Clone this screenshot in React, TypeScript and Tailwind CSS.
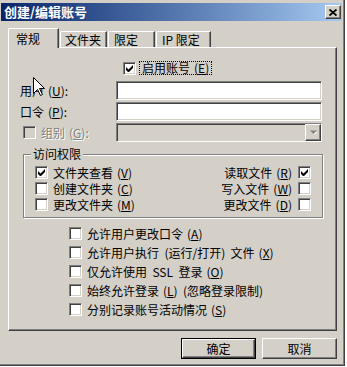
import React from "react";

const font = "font-['Noto_Sans_CJK_SC','Noto_Sans',sans-serif]";
const sunken =
  "border border-t-[#808080] border-l-[#808080] border-b-white border-r-white shadow-[inset_1px_1px_0_#404040,inset_-1px_-1px_0_#d4d0c8]";
const raised =
  "border border-t-white border-l-white border-b-[#404040] border-r-[#404040] shadow-[inset_-1px_-1px_0_#808080]";

function Acc({ k }: { k: string }) {
  return (
    <span className="ml-[4px]">
      (<span className="underline underline-offset-1">{k}</span>)
    </span>
  );
}

function Check({ on, disabled }: { on?: boolean; disabled?: boolean }) {
  return (
    <span
      className={`w-[13px] h-[13px] shrink-0 flex items-center justify-center ${sunken} ${
        disabled ? "bg-[#d4d0c8]" : "bg-white"
      }`}
    >
      {on && (
        <svg width="7" height="7" viewBox="0 0 7 7">
          <path d="M0 2L2.5 4.5L7 0V3L2.5 7.5L0 5Z" fill="#000" />
        </svg>
      )}
    </span>
  );
}

function Row({ on, children }: { on?: boolean; children: React.ReactNode }) {
  return (
    <div className="flex items-center h-[13px] gap-[5px]">
      <Check on={on} />
      <span className="leading-[13px] whitespace-nowrap">{children}</span>
    </div>
  );
}

function RowR({ on, children }: { on?: boolean; children: React.ReactNode }) {
  return (
    <div className="flex items-center justify-end h-[13px] gap-[6px]">
      <span className="leading-[13px] whitespace-nowrap">{children}</span>
      <Check on={on} />
    </div>
  );
}

function Tab({ label, active, w, pl }: { label: string; active?: boolean; w: string; pl: string }) {
  return (
    <div
      className={`${w} ${pl} ${
        active ? "h-[20px] -mb-[1px] z-10 pt-[3px]" : "h-[16px] pt-[1px] ml-[1px]"
      } relative bg-[#d4d0c8] border-t border-l border-r border-t-white border-l-white border-r-[#404040] rounded-tl-[2px] shadow-[inset_-1px_0_0_#808080] leading-[13px] whitespace-nowrap`}
    >
      {label}
    </div>
  );
}

function Button({ label, def }: { label: string; def?: boolean }) {
  const inner = (
    <div className={`w-full h-full flex items-center justify-center bg-[#d4d0c8] ${raised}`}>{label}</div>
  );
  return def ? (
    <div className="w-[75px] h-[21px] border border-black">{inner}</div>
  ) : (
    <div className="w-[75px] h-[21px]">{inner}</div>
  );
}

export default function App() {
  return (
    <div className={`w-[347px] h-[367px] bg-white overflow-hidden text-[12px] text-black ${font}`}>
      <div className="relative w-[345px] h-[366px] bg-[#d4d0c8] border-r border-b border-[#404040] shadow-[inset_-1px_-1px_0_#808080] flex flex-col">
        {/* title bar */}
        <div className="ml-[1px] mt-[3px] w-[341px] h-[18px] bg-linear-to-r from-[#0a246a] to-[#a6caf0] flex items-center justify-between">
          <span className="ml-[3px] text-white font-bold text-[13px] leading-[18px]">创建/编辑账号</span>
          <div className={`mr-[1px] w-[16px] h-[14px] bg-[#d4d0c8] flex items-center justify-center ${raised}`}>
            <svg width="8" height="7" viewBox="0 0 8 7">
              <path d="M0.5 0.5L7.5 6.5M7.5 0.5L0.5 6.5" stroke="#000" strokeWidth="1.8" />
            </svg>
          </div>
        </div>

        {/* tabs */}
        <div className="mt-[7px] ml-[8px] flex items-end h-[19px]">
          <Tab label="常规" active w="w-[51px]" pl="pl-[7px]" />
          <Tab label="文件夹" w="w-[47px]" pl="pl-[4px]" />
          <Tab label="限定" w="w-[47px]" pl="pl-[5px]" />
          <Tab label="IP 限定" w="w-[55px]" pl="pl-[5px]" />
        </div>

        {/* panel */}
        <div className="ml-[8px] w-[329px] h-[284px] border-t border-l border-r border-b border-t-white border-l-white border-r-[#404040] border-b-[#404040] shadow-[inset_-1px_-1px_0_#808080] flex flex-col">
          <div className="mt-[13px] ml-[114px] flex items-center h-[14px]">
            <Check on />
            <span className="ml-[3px] px-[2px] h-[14px] leading-[12px] border border-dotted border-black whitespace-nowrap">
              启用账号<Acc k="E" />
            </span>
          </div>

          <div className="mt-[6px] flex items-center h-[19px]">
            <span className="ml-[11px] w-[96px] whitespace-nowrap">
              用户<Acc k="U" />:
            </span>
            <div className={`w-[206px] h-[19px] bg-white ${sunken}`} />
          </div>
          <div className="mt-[2px] flex items-center h-[19px]">
            <span className="ml-[11px] w-[96px] whitespace-nowrap">
              口令<Acc k="P" />:
            </span>
            <div className={`w-[206px] h-[19px] bg-white ${sunken}`} />
          </div>
          <div className="mt-[2px] flex items-center h-[19px]">
            <div className="ml-[14px] w-[93px] flex items-center gap-[5px] text-[#808080] [text-shadow:1px_1px_0_#fff]">
              <Check disabled />
              <span className="whitespace-nowrap">
                组别<Acc k="G" />:
              </span>
            </div>
            <div className={`w-[206px] h-[19px] bg-[#d4d0c8] flex justify-end ${sunken}`}>
              <div className={`w-[16px] h-full flex items-center justify-center ${raised}`}>
                <svg width="7" height="5" viewBox="0 0 7 5">
                  <path d="M1 1H6L3.5 3.5Z" fill="#fff" transform="translate(1 1)" />
                  <path d="M0 0.5H7L3.5 4Z" fill="#808080" />
                </svg>
              </div>
            </div>
          </div>

          {/* group box */}
          <div className="relative mt-[12px] ml-[14px] w-[300px] h-[64px] border border-[#808080] shadow-[inset_1px_1px_0_#fff,1px_1px_0_#fff] pt-[11px] pl-[11px] pr-[11px] flex justify-between">
            <span className="absolute -top-[8px] left-[7px] px-[2px] bg-[#d4d0c8] leading-[14px]">访问权限</span>
            <div className="flex flex-col gap-[3px]">
              <Row on>
                文件夹查看<Acc k="V" />
              </Row>
              <Row>
                创建文件夹<Acc k="C" />
              </Row>
              <Row>
                更改文件夹<Acc k="M" />
              </Row>
            </div>
            <div className="flex flex-col gap-[3px]">
              <RowR on>
                读取文件<Acc k="R" />
              </RowR>
              <RowR>
                写入文件<Acc k="W" />
              </RowR>
              <RowR>
                更改文件<Acc k="D" />
              </RowR>
            </div>
          </div>

          <div className="mt-[9px] ml-[60px] flex flex-col gap-[6px]">
            <Row>
              允许用户更改口令<Acc k="A" />
            </Row>
            <Row>
              允许用户执行 &nbsp;(运行/打开)&nbsp; 文件<Acc k="X" />
            </Row>
            <Row>
              仅允许使用 &nbsp;SSL&nbsp; 登录<Acc k="O" />
            </Row>
            <Row>
              始终允许登录<Acc k="L" /> &nbsp;(忽略登录限制)
            </Row>
            <Row>
              分别记录账号活动情况<Acc k="S" />
            </Row>
          </div>
        </div>

        <div className="mt-[7px] ml-[181px] flex gap-[6px]">
          <Button label="确定" def />
          <Button label="取消" />
        </div>

        {/* mouse pointer */}
        <svg className="absolute left-[33px] top-[77px]" width="13" height="20" viewBox="0 0 13 20">
          <path d="M0.5 0.5V16.5L4.5 12.5L7.5 18.5L9.5 17.5L6.5 11.5H11.5Z" fill="#fff" stroke="#000" strokeWidth="1" />
        </svg>
      </div>
    </div>
  );
}
